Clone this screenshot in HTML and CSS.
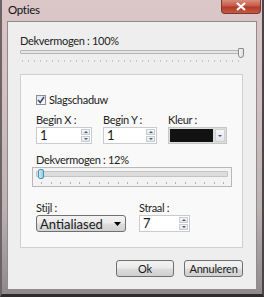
FILE: index.html
```html
<!DOCTYPE html>
<html lang="nl">
<head>
  <meta charset="UTF-8">
  <title>Opties</title>
  <link rel="stylesheet" href="styles.css">
</head>
<body>

  <div class="window">

    <!-- Title bar -->
    <div class="titlebar">
      <span class="title">Opties</span>
      <div class="close-btn">
        <svg width="12" height="9" viewBox="0 0 12 9"><path d="M2 1 L10 8 M10 1 L2 8" stroke="#fff" stroke-width="2.2"/></svg>
      </div>
    </div>

    <!-- Client area -->
    <div class="client">
      <div class="label">Dekvermogen : 100%</div>
      <div class="slider-top">
        <div class="track"></div>
        <div class="thumb-top"></div>
        <div class="ticks"></div>
      </div>

      <div class="panel">
        <div class="check-row">
          <span class="checkbox">
            <svg width="8" height="8" viewBox="0 0 8 8"><path d="M1 4 L3.2 6.5 L7 1" stroke="#2b4a7a" stroke-width="1.5" fill="none"/></svg>
          </span>
          <span>Slagschaduw</span>
        </div>

        <div class="field-row">
          <div class="field field-x">
            <div class="label small">Begin X :</div>
            <div class="spin w56">
              <span class="spin-val">1</span>
              <span class="spin-btns"><i class="up"></i><i class="down"></i></span>
            </div>
          </div>
          <div class="field field-y">
            <div class="label small">Begin Y :</div>
            <div class="spin w54">
              <span class="spin-val">1</span>
              <span class="spin-btns"><i class="up"></i><i class="down"></i></span>
            </div>
          </div>
          <div class="field">
            <div class="label small">Kleur :</div>
            <div class="color-pick">
              <span class="swatch"></span>
              <span class="color-drop"><i class="down"></i></span>
            </div>
          </div>
        </div>

        <div class="label small second">Dekvermogen : 12%</div>
        <div class="slider-box">
          <div class="track"></div>
          <div class="thumb"></div>
          <div class="ticks wide"></div>
        </div>

        <div class="field-row bottom-row">
          <div class="field field-style">
            <div class="label small">Stijl :</div>
            <div class="combo">
              <span>Antialiased</span>
              <svg width="7" height="4" viewBox="0 0 7 4"><path d="M0 0 H7 L3.5 4 Z" fill="#000"/></svg>
            </div>
          </div>
          <div class="field">
            <div class="label small">Straal :</div>
            <div class="spin w51">
              <span class="spin-val">7</span>
              <span class="spin-btns"><i class="up"></i><i class="down"></i></span>
            </div>
          </div>
        </div>
      </div>

      <div class="buttons">
        <button class="btn btn-ok">Ok</button>
        <button class="btn">Annuleren</button>
      </div>
    </div>

  </div>

</body>
</html>
```

FILE: styles.css
```css
/* General Reset */
* {
  margin: 0;
  padding: 0;
  box-sizing: border-box;
}

body {
  font-family: 'Lato', 'Noto Sans', sans-serif;
  font-size: 11px;
  letter-spacing: -0.3px;
  color: #1a1a1a;
  background-color: #3a3a3a;
}

/* Window frame */
.window {
  width: 264px;
  height: 297px;
  display: flex;
  flex-direction: column;
  background: linear-gradient(to bottom, #dbc6c8 0%, #d2bfc1 35%, #bcb3b5 70%, #8e8a8c 100%);
  border-left: 2px solid #6e6466;
  border-right: 2px solid #4a4446;
  border-bottom: 3px solid #2e2b2c;
  padding: 0 5px 4px 5px;
}

/* Title bar */
.titlebar {
  height: 21px;
  display: flex;
  justify-content: space-between;
  align-items: flex-start;
}

.title {
  padding-left: 1px;
  padding-top: 3px;
  font-size: 11.5px;
  color: #111;
}

.close-btn {
  width: 40px;
  height: 14px;
  margin-right: -4px;
  display: flex;
  align-items: center;
  justify-content: center;
  background: linear-gradient(to bottom, #d88c7c 0%, #c75a48 45%, #b23a26 55%, #c45a44 100%);
  border: 1px solid #7a3a30;
  border-top: none;
  border-radius: 0 0 4px 4px;
}

/* Client area */
.client {
  flex: 1;
  background-color: #efeeee;
  border: 1px solid #8f8a8b;
  padding: 11px 13px 0 12px;
  display: flex;
  flex-direction: column;
}

.label {
  height: 15px;
  line-height: 15px;
  color: #222;
}

.label.small {
  height: 14px;
  line-height: 14px;
}

/* Sliders */
.slider-top {
  position: relative;
  height: 17px;
  width: 223px;
}

.track {
  position: absolute;
  left: 0;
  right: 3px;
  top: 2px;
  height: 4px;
  background-color: #e6e6e6;
  border: 1px solid #b5b5b5;
  border-radius: 1px;
}

.thumb-top {
  position: absolute;
  left: 218px;
  top: 0;
  width: 6px;
  height: 10px;
  background: linear-gradient(to right, #f8f8f8, #dcdcdc);
  border: 1px solid #8a8a8a;
  border-radius: 1px 1px 3px 3px;
}

.ticks {
  position: absolute;
  left: 2px;
  right: 4px;
  top: 12px;
  height: 2px;
  background: repeating-linear-gradient(to right, #c4c4c4 0, #c4c4c4 1px, transparent 1px, transparent 6px);
}

/* Group panel */
.panel {
  margin-top: 9px;
  height: 174px;
  background-color: #faf9f9;
  border: 1px solid #d2cfcf;
  padding: 17px 0 0 15px;
}

.check-row {
  display: flex;
  align-items: center;
  gap: 3px;
  height: 15px;
  line-height: 15px;
}

.checkbox {
  width: 10px;
  height: 10px;
  border: 1px solid #8e8f8f;
  background: linear-gradient(to bottom, #e4e6e9, #fafafa);
  display: flex;
  align-items: center;
  justify-content: center;
}

.field-row {
  display: flex;
  margin-top: 6px;
}

.field-x {
  width: 67px;
}

.field-y {
  width: 65px;
}

.field-style {
  width: 103px;
}

/* Spin boxes */
.spin {
  height: 17px;
  display: flex;
  background-color: #fff;
  border: 1px solid #c9cbd0;
}

.w56 { width: 56px; }
.w54 { width: 54px; }
.w51 { width: 51px; }

.spin-val {
  flex: 1;
  padding-left: 3px;
  line-height: 15px;
  font-size: 13px;
  letter-spacing: 0;
}

.spin-btns {
  width: 10px;
  display: flex;
  flex-direction: column;
  padding: 1px 1px 1px 0;
  gap: 1px;
}

.spin-btns i,
.color-drop i {
  flex: 1;
  position: relative;
  border: 1px solid #c8cbd2;
  background: linear-gradient(to bottom, #f5f6f8, #e2e5ea);
}

.spin-btns i::after,
.color-drop i::after {
  content: '';
  position: absolute;
  left: 50%;
  top: 50%;
  margin-left: -2px;
  margin-top: -1px;
  border-left: 2px solid transparent;
  border-right: 2px solid transparent;
}

.up::after {
  border-bottom: 2px solid #4a5a70;
}

.down::after {
  border-top: 2px solid #4a5a70;
}

/* Colour picker */
.color-pick {
  width: 59px;
  height: 17px;
  display: flex;
  padding: 1px;
  background-color: #dedede;
  border: 1px solid #c6c6c6;
}

.swatch {
  width: 43px;
  background-color: #121212;
}

.color-drop {
  flex: 1;
  display: flex;
  padding-left: 2px;
}

.color-drop i {
  border-color: #d0d0d0;
}

/* Second slider */
.second {
  margin-top: 9px;
}

.slider-box {
  position: relative;
  width: 200px;
  height: 20px;
  margin-left: -4px;
  border: 1px solid #b9b7b7;
  background-color: #f4f3f3;
}

.slider-box .track {
  left: 3px;
  right: 3px;
  top: 3px;
  height: 6px;
  background-color: #dcdcdc;
  border-color: #c4c4c4;
}

.thumb {
  position: absolute;
  left: 5px;
  top: 1px;
  width: 6px;
  height: 10px;
  background: linear-gradient(to right, #cdeefb, #8fcbe8);
  border: 1px solid #4f8fb4;
  border-radius: 2px;
}

.ticks.wide {
  left: 8px;
  right: 4px;
  top: 14px;
  background: repeating-linear-gradient(to right, #b5b5b5 0, #b5b5b5 1px, transparent 1px, transparent 9.6px);
}

.bottom-row {
  margin-top: 14px;
}

/* Combo box */
.combo {
  width: 90px;
  height: 17px;
  display: flex;
  align-items: center;
  justify-content: space-between;
  padding: 0 4px 0 3px;
  background: linear-gradient(to bottom, #f3f3f3 0%, #ebebeb 48%, #dddddd 52%, #d2d2d2 100%);
  border: 1px solid #707070;
  border-radius: 3px;
  font-size: 13px;
  letter-spacing: 0;
}

/* Buttons */
.buttons {
  display: flex;
  justify-content: flex-end;
  gap: 10px;
  margin-top: 12px;
}

.btn {
  width: 59px;
  height: 17px;
  font-family: 'Lato', 'Noto Sans', sans-serif;
  font-size: 11px;
  letter-spacing: -0.2px;
  color: #1a1a1a;
  background: linear-gradient(to bottom, #f2f2f2 0%, #ebebeb 48%, #dddddd 52%, #cfcfcf 100%);
  border: 1px solid #707070;
  border-radius: 3px;
  line-height: 14px;
}

.btn-ok {
  width: 58px;
}
```
